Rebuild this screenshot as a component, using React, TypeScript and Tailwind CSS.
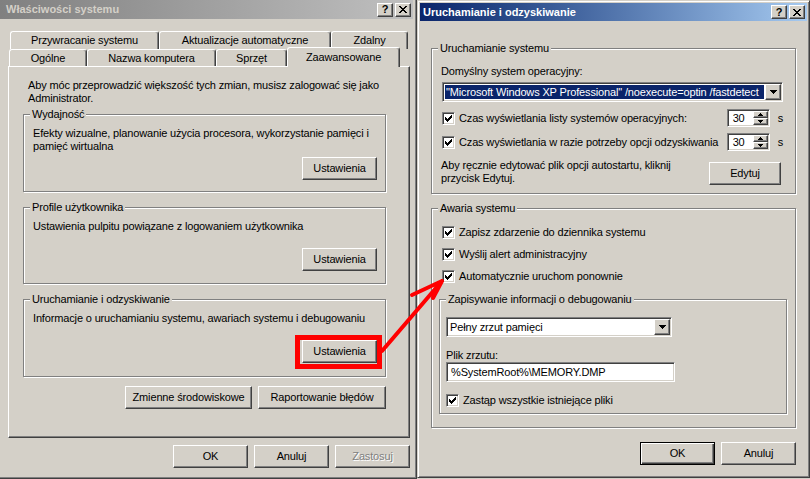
import type { ReactNode } from 'react';

// klasyczne krawędzie 3D (Windows 2000/XP classic)
const RAISED =
  'border border-t-white border-l-white border-r-[#404040] border-b-[#404040] shadow-[inset_-1px_-1px_0_#808080]';
const SUNKEN =
  'border border-t-[#808080] border-l-[#808080] border-r-white border-b-white shadow-[inset_1px_1px_0_#404040,inset_-1px_-1px_0_#d4d0c8]';

function CheckMark() {
  return (
    <svg width="7" height="7" viewBox="0 0 7 7" shapeRendering="crispEdges">
      <path
        d="M6 0h1v1h-1zM5 1h2v1h-2zM0 2h1v1h-1zM4 2h3v1h-3zM0 3h2v1h-2zM3 3h3v1h-3zM0 4h5v1h-5zM1 5h3v1h-3zM2 6h1v1h-1z"
        fill="#000"
      />
    </svg>
  );
}

function CloseGlyph() {
  return (
    <svg width="8" height="7" viewBox="0 0 8 7" shapeRendering="crispEdges">
      <path
        d="M0 0h2v1h-2zM6 0h2v1h-2zM1 1h2v1h-2zM5 1h2v1h-2zM2 2h4v1h-4zM3 3h2v1h-2zM2 4h4v1h-4zM1 5h2v1h-2zM5 5h2v1h-2zM0 6h2v1h-2zM6 6h2v1h-2z"
        fill="#000"
      />
    </svg>
  );
}

function DownArrow() {
  return (
    <svg width="7" height="4" viewBox="0 0 7 4" shapeRendering="crispEdges">
      <path d="M0 0h7v1h-7zM1 1h5v1h-5zM2 2h3v1h-3zM3 3h1v1h-1z" fill="#000" />
    </svg>
  );
}

function SpinArrow({ up }: { up?: boolean }) {
  return (
    <svg width="5" height="3" viewBox="0 0 5 3" shapeRendering="crispEdges">
      <path
        d={up ? 'M2 0h1v1h-1zM1 1h3v1h-3zM0 2h5v1h-5z' : 'M0 0h5v1h-5zM1 1h3v1h-3zM2 2h1v1h-1z'}
        fill="#000"
      />
    </svg>
  );
}

function CaptionBtn({ children }: { children: ReactNode }) {
  return (
    <div className={`w-[16px] h-[14px] flex items-center justify-center bg-[#d4d0c8] text-black text-[11px] leading-none ${RAISED}`}>
      {children}
    </div>
  );
}

function TitleBar({ title, active }: { title: string; active?: boolean }) {
  return (
    <div
      className={`flex items-center justify-between shrink-0 pr-[2px] bg-linear-to-r font-bold tracking-normal ${
        active
          ? 'h-[18px] pl-[3px] from-[#0a246a] to-[#a6caf0] text-white'
          : 'h-[19px] pl-[6px] from-[#808080] to-[#c0c0c0] text-[#d4d0c8]'
      }`}
    >
      <span>{title}</span>
      <div className="flex gap-[2px]">
        <CaptionBtn>
          <span className="font-bold">?</span>
        </CaptionBtn>
        <CaptionBtn>
          <CloseGlyph />
        </CaptionBtn>
      </div>
    </div>
  );
}

function Btn({
  children,
  className = '',
  def,
  disabled,
}: {
  children: ReactNode;
  className?: string;
  def?: boolean;
  disabled?: boolean;
}) {
  const edge = def
    ? 'border border-black shadow-[inset_1px_1px_0_white,inset_-1px_-1px_0_#404040,inset_-2px_-2px_0_#808080]'
    : RAISED;
  return (
    <div
      className={`h-[23px] flex items-center justify-center shrink-0 ${edge} ${
        disabled ? 'text-[#808080] [text-shadow:1px_1px_0_white]' : ''
      } ${className}`}
    >
      {children}
    </div>
  );
}

function Group({ title, className = '', children }: { title: string; className?: string; children: ReactNode }) {
  return (
    <fieldset className={`min-w-0 border border-[#808080] shadow-[1px_1px_0_white,inset_1px_1px_0_white] ${className}`}>
      <legend className="ml-[6px] px-[2px] leading-[13px] bg-[#d4d0c8]">{title}</legend>
      {children}
    </fieldset>
  );
}

function Check({ children, className = '' }: { children: ReactNode; className?: string }) {
  return (
    <div className={`flex items-center gap-[4px] ${className}`}>
      <span className={`w-[13px] h-[13px] bg-white shrink-0 flex items-center justify-center ${SUNKEN}`}>
        <CheckMark />
      </span>
      <span>{children}</span>
    </div>
  );
}

function Combo({ children, className = '', selected }: { children: ReactNode; className?: string; selected?: boolean }) {
  return (
    <div className={`flex min-w-0 bg-white p-[1px] ${SUNKEN} ${className}`}>
      <div className="flex-1 min-w-0 p-[1px] flex">
        <div
          className={`flex-1 min-w-0 flex items-center px-[1px] overflow-hidden ${
            selected ? 'bg-[#0a246a] text-white' : ''
          }`}
        >
          {children}
        </div>
      </div>
      <div className={`w-[16px] shrink-0 flex items-center justify-center bg-[#d4d0c8] ${RAISED}`}>
        <DownArrow />
      </div>
    </div>
  );
}

function Spin() {
  return (
    <div className={`w-[43px] h-[18px] flex bg-white p-[1px] shrink-0 ${SUNKEN}`}>
      <span className="flex-1 pl-[4px] flex items-center">30</span>
      <div className="w-[15px] flex flex-col">
        <div className={`flex-1 flex items-center justify-center bg-[#d4d0c8] ${RAISED}`}>
          <SpinArrow up />
        </div>
        <div className={`flex-1 flex items-center justify-center bg-[#d4d0c8] ${RAISED}`}>
          <SpinArrow />
        </div>
      </div>
    </div>
  );
}

function Tab({ children, className = '' }: { children: ReactNode; className?: string }) {
  return (
    <div
      className={`flex items-center justify-center shrink-0 bg-[#d4d0c8] border-t border-l border-r border-t-white border-l-white border-r-[#404040] rounded-t-[3px] shadow-[inset_-1px_0_0_#808080] ${className}`}
    >
      {children}
    </div>
  );
}

function SystemProperties() {
  return (
    <div className="w-[417px] h-[479px] shrink-0 flex flex-col border-r border-b border-r-[#404040] border-b-[#404040] shadow-[inset_-1px_-1px_0_#808080] pr-[3px]">
      <TitleBar title="Właściwości systemu" />
      <div className="flex flex-col pl-[8px] pt-[12px]">
        {/* dwa rzędy zakładek */}
        <div className="flex h-[18px] pl-[2px]">
          <Tab className="w-[149px] h-[18px]">Przywracanie systemu</Tab>
          <Tab className="w-[172px] h-[18px]">Aktualizacje automatyczne</Tab>
          <Tab className="w-[77px] h-[18px]">Zdalny</Tab>
        </div>
        <div className="flex items-end h-[17px] pl-[1px]">
          <Tab className="w-[78px] h-[17px]">Ogólne</Tab>
          <Tab className="w-[129px] h-[17px]">Nazwa komputera</Tab>
          <Tab className="w-[71px] h-[17px]">Sprzęt</Tab>
          <Tab className="relative z-10 w-[113px] h-[20px] -mb-[1px]">Zaawansowane</Tab>
        </div>

        <div className={`w-[402px] h-[372px] flex flex-col pl-[14px] pr-[23px] pt-[12px] ${RAISED}`}>
          <p className="pl-[5px]">
            Aby móc przeprowadzić większość tych zmian, musisz zalogować się jako
            <br />
            Administrator.
          </p>

          <Group title="Wydajność" className="mt-[3px]">
            <div className="flex flex-col pl-[9px] pr-[8px] pt-[6px] pb-[11px]">
              <p className="h-[26px]">
                Efekty wizualne, planowanie użycia procesora, wykorzystanie pamięci i
                <br />
                pamięć wirtualna
              </p>
              <Btn className="self-end w-[75px] mt-[4px]">Ustawienia</Btn>
            </div>
          </Group>

          <Group title="Profile użytkownika" className="mt-[9px]">
            <div className="flex flex-col pl-[9px] pr-[8px] pt-[6px] pb-[12px]">
              <p className="h-[13px]">Ustawienia pulpitu powiązane z logowaniem użytkownika</p>
              <Btn className="self-end w-[75px] mt-[15px]">Ustawienia</Btn>
            </div>
          </Group>

          <Group title="Uruchamianie i odzyskiwanie" className="mt-[9px]">
            <div className="flex flex-col pl-[9px] pr-[8px] pt-[6px] pb-[13px]">
              <p className="h-[13px]">Informacje o uruchamianiu systemu, awariach systemu i debugowaniu</p>
              <Btn className="self-end w-[75px] mt-[15px]">Ustawienia</Btn>
            </div>
          </Group>

          <div className="flex justify-end gap-[6px] mt-[9px]">
            <Btn className="w-[127px]">Zmienne środowiskowe</Btn>
            <Btn className="w-[128px]">Raportowanie błędów</Btn>
          </div>
        </div>

        <div className="w-[402px] flex justify-end gap-[6px] mt-[7px]">
          <Btn className="w-[75px]">OK</Btn>
          <Btn className="w-[75px]">Anuluj</Btn>
          <Btn className="w-[75px]" disabled>
            Zastosuj
          </Btn>
        </div>
      </div>
    </div>
  );
}

function StartupRecovery() {
  return (
    <div className="w-[393px] h-[478px] shrink-0 flex flex-col border border-t-[#d4d0c8] border-l-[#d4d0c8] border-r-[#404040] border-b-[#404040] shadow-[inset_1px_1px_0_white,inset_-1px_-1px_0_#808080] p-[2px]">
      <TitleBar title="Uruchamianie i odzyskiwanie" active />
      <div className="flex flex-col px-[11px] pt-[21px]">
        <Group title="Uruchamianie systemu">
          <div className="flex flex-col pl-[9px] pr-[12px] pt-[10px] pb-[8px]">
            <p>Domyślny system operacyjny:</p>
            <Combo className="h-[20px] mt-[4px] ml-[1px]" selected>
              "Microsoft Windows XP Professional" /noexecute=optin /fastdetect
            </Combo>
            <div className="flex items-center h-[20px] mt-[6px] pl-[1px]">
              <Check>Czas wyświetlania listy systemów operacyjnych:</Check>
              <div className="ml-auto">
                <Spin />
              </div>
              <span className="ml-[8px]">s</span>
            </div>
            <div className="flex items-center h-[20px] mt-[4px] pl-[1px]">
              <Check>Czas wyświetlania w razie potrzeby opcji odzyskiwania</Check>
              <div className="ml-auto">
                <Spin />
              </div>
              <span className="ml-[8px]">s</span>
            </div>
            <div className="flex justify-between mt-[7px]">
              <p>
                Aby ręcznie edytować plik opcji autostartu, kliknij
                <br />
                przycisk Edytuj.
              </p>
              <Btn className="w-[72px] mt-[3px] mr-[2px]">Edytuj</Btn>
            </div>
          </div>
        </Group>

        <Group title="Awaria systemu" className="mt-[8px]">
          <div className="flex flex-col pl-[10px] pr-[8px] pt-[7px] pb-[13px]">
            <div className="flex flex-col gap-[2px]">
              <Check className="h-[20px]">Zapisz zdarzenie do dziennika systemu</Check>
              <Check className="h-[20px]">Wyślij alert administracyjny</Check>
              <Check className="h-[20px]">Automatycznie uruchom ponownie</Check>
            </div>
            <Group title="Zapisywanie informacji o debugowaniu" className="mt-[7px] -ml-[3px]">
              <div className="flex flex-col items-start pl-[6px] pt-[11px] pb-[3px]">
                <Combo className="w-[226px] h-[20px]">Pełny zrzut pamięci</Combo>
                <p className="mt-[12px]">Plik zrzutu:</p>
                <div className={`w-[229px] h-[20px] bg-white flex items-center pl-[4px] ${SUNKEN}`}>
                  %SystemRoot%\MEMORY.DMP
                </div>
                <Check className="h-[20px] mt-[8px]">Zastąp wszystkie istniejące pliki</Check>
              </div>
            </Group>
          </div>
        </Group>

        <div className="flex justify-end gap-[6px] mt-[14px]">
          <Btn className="w-[75px]" def>
            OK
          </Btn>
          <Btn className="w-[75px]">Anuluj</Btn>
        </div>
      </div>
    </div>
  );
}

export default function App() {
  return (
    <div className="relative w-[810px] h-[479px] flex overflow-hidden whitespace-nowrap bg-[#d4d0c8] text-black text-[11px] leading-[13px] tracking-[-0.15px] font-['Liberation_Sans',Arial,sans-serif]">
      <SystemProperties />
      <StartupRecovery />

      {/* czerwone oznaczenia: podkreślenie zakładki, ramka przycisku i strzałka */}
      <svg className="absolute inset-0 pointer-events-none" width="810" height="479" viewBox="0 0 810 479">
        <path d="M304 63 Q350 61.5 389 64" stroke="#f00" strokeWidth="3" fill="none" strokeLinecap="round" />
        <rect x="297.5" y="337.5" width="82" height="29" stroke="#f00" strokeWidth="5" fill="none" />
        <path
          d="M382 351 L442 281 M442 281 L412 295 M442 281 L433 298"
          stroke="#f00"
          strokeWidth="4"
          fill="none"
          strokeLinecap="round"
          strokeLinejoin="round"
        />
      </svg>
    </div>
  );
}
